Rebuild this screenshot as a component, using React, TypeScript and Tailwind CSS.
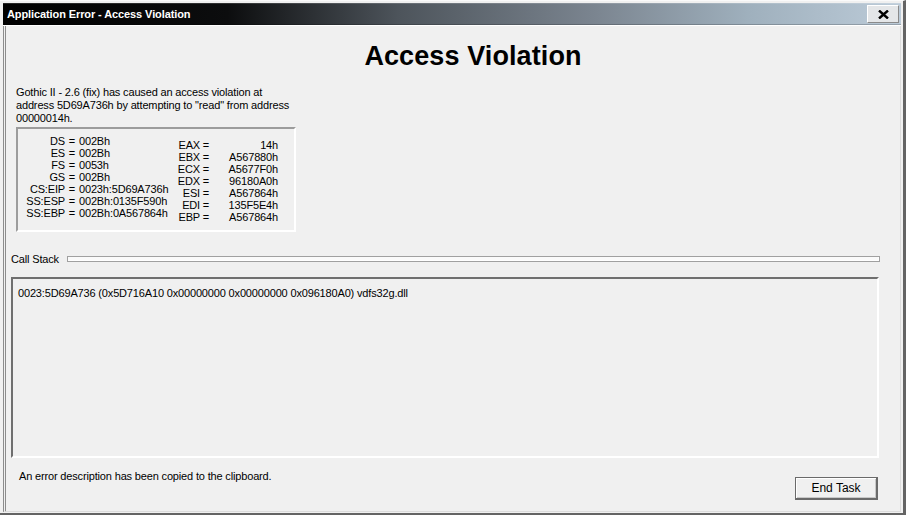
const leftRegs: [string, string][] = [
  ["DS", "002Bh"],
  ["ES", "002Bh"],
  ["FS", "0053h"],
  ["GS", "002Bh"],
  ["CS:EIP", "0023h:5D69A736h"],
  ["SS:ESP", "002Bh:0135F590h"],
  ["SS:EBP", "002Bh:0A567864h"],
];

const rightRegs: [string, string][] = [
  ["EAX", "14h"],
  ["EBX", "A567880h"],
  ["ECX", "A5677F0h"],
  ["EDX", "96180A0h"],
  ["ESI", "A567864h"],
  ["EDI", "135F5E4h"],
  ["EBP", "A567864h"],
];

export default function App() {
  return (
    <div className="w-[906px] h-[515px] bg-[#f0f0f0] border-t border-t-[#fafafa] border-r-[3px] border-b-[2px] border-r-[#646464] border-b-[#646464] flex flex-col pt-[2px] pl-[3px] pr-[2px] pb-[1px] font-['Liberation_Sans',Arial,sans-serif] text-[11px] leading-[13px] text-black overflow-hidden">
      {/* Title bar */}
      <div className="h-[22px] flex items-center justify-between bg-[linear-gradient(to_right,#000_0%,#0c0d0e_25%,#4d545b_44%,#7b8590_66%,#9fb0bd_83%,#bccbd8_100%)] shadow-[inset_0_1px_0_rgba(255,255,255,0.15),inset_0_-1px_0_rgba(0,0,0,0.2)]">
        <span className="pl-[4px] text-white font-bold text-[11px] tracking-[-0.1px]">
          Application Error - Access Violation
        </span>
        <button className="mr-[2px] w-[32px] h-[18px] flex items-center justify-center bg-[#e4e6e8] border border-t-white border-l-white border-b-[#8a8a8a] border-r-[#8a8a8a]">
          <svg width="11" height="9" viewBox="0 0 11 9">
            <path d="M1 0.5 L10 8.5 M10 0.5 L1 8.5" stroke="#000" strokeWidth="2.4" />
          </svg>
        </button>
      </div>
      <div className="h-px bg-white" />

      {/* Body */}
      <div className="flex-1 flex flex-col border-l-[3px] border-double border-l-[#8c8c8c] border-r border-r-[#dcdcdc] border-b border-b-[#dcdcdc] pl-[5px] pr-[20px] tracking-[-0.16px]">
        <div className="mt-[14px] h-[32px] pl-[55px] text-center text-[27px] leading-[32px] font-bold tracking-[0.1px]">
          Access Violation
        </div>

        <div className="mt-[14px] ml-[5px] leading-[13px]">
          Gothic II - 2.6 (fix) has caused an access violation at
          <br />
          address 5D69A736h by attempting to "read" from address
          <br />
          00000014h.
        </div>

        {/* Registers */}
        <div className="mt-[2px] ml-[5px] w-[280px] h-[105px] flex border-2 border-t-[#9c9c9c] border-l-[#9c9c9c] border-b-white border-r-white leading-[12px]">
          <div className="pt-[6px] flex flex-col">
            {leftRegs.map(([k, v]) => (
              <div key={k} className="flex">
                <span className="w-[47px] text-right">{k}</span>
                <span className="w-[14px] text-center">=</span>
                <span className="w-[88px]">{v}</span>
              </div>
            ))}
          </div>
          <div className="ml-[3px] pt-[10px] flex flex-col">
            {rightRegs.map(([k, v]) => (
              <div key={k} className="flex">
                <span className="w-[30px] text-right">{k}</span>
                <span className="w-[12px] text-center">=</span>
                <span className="w-[66px] text-right">{v}</span>
              </div>
            ))}
          </div>
        </div>

        {/* Call stack header */}
        <div className="mt-[20px] h-[14px] flex items-center">
          <span>Call Stack</span>
          <div className="ml-[8px] flex-1 h-[6px] border border-[#a0a0a0] bg-[#fafafa] shadow-[inset_-1px_-1px_0_#fff]" />
        </div>

        {/* Call stack list */}
        <div className="mt-[11px] mr-[1px] h-[181px] border-2 border-t-[#6f6f6f] border-l-[#6f6f6f] border-b-white border-r-white pt-[8px] pl-[5px]">
          0023:5D69A736 (0x5D716A10 0x00000000 0x00000000 0x096180A0) vdfs32g.dll
        </div>

        {/* Footer */}
        <div className="mt-[12px] flex justify-between items-start">
          <span className="pl-[8px]">An error description has been copied to the clipboard.</span>
          <button className="mt-[7px] mr-[2px] w-[83px] h-[23px] flex items-center justify-center bg-[#f0f0f0] border-t border-l border-b-2 border-r-2 border-[#6a6a6a] shadow-[inset_1px_1px_0_#fff,inset_-1px_-1px_0_#c8c8c8] text-[12px] tracking-normal">
            End Task
          </button>
        </div>
      </div>
    </div>
  );
}
